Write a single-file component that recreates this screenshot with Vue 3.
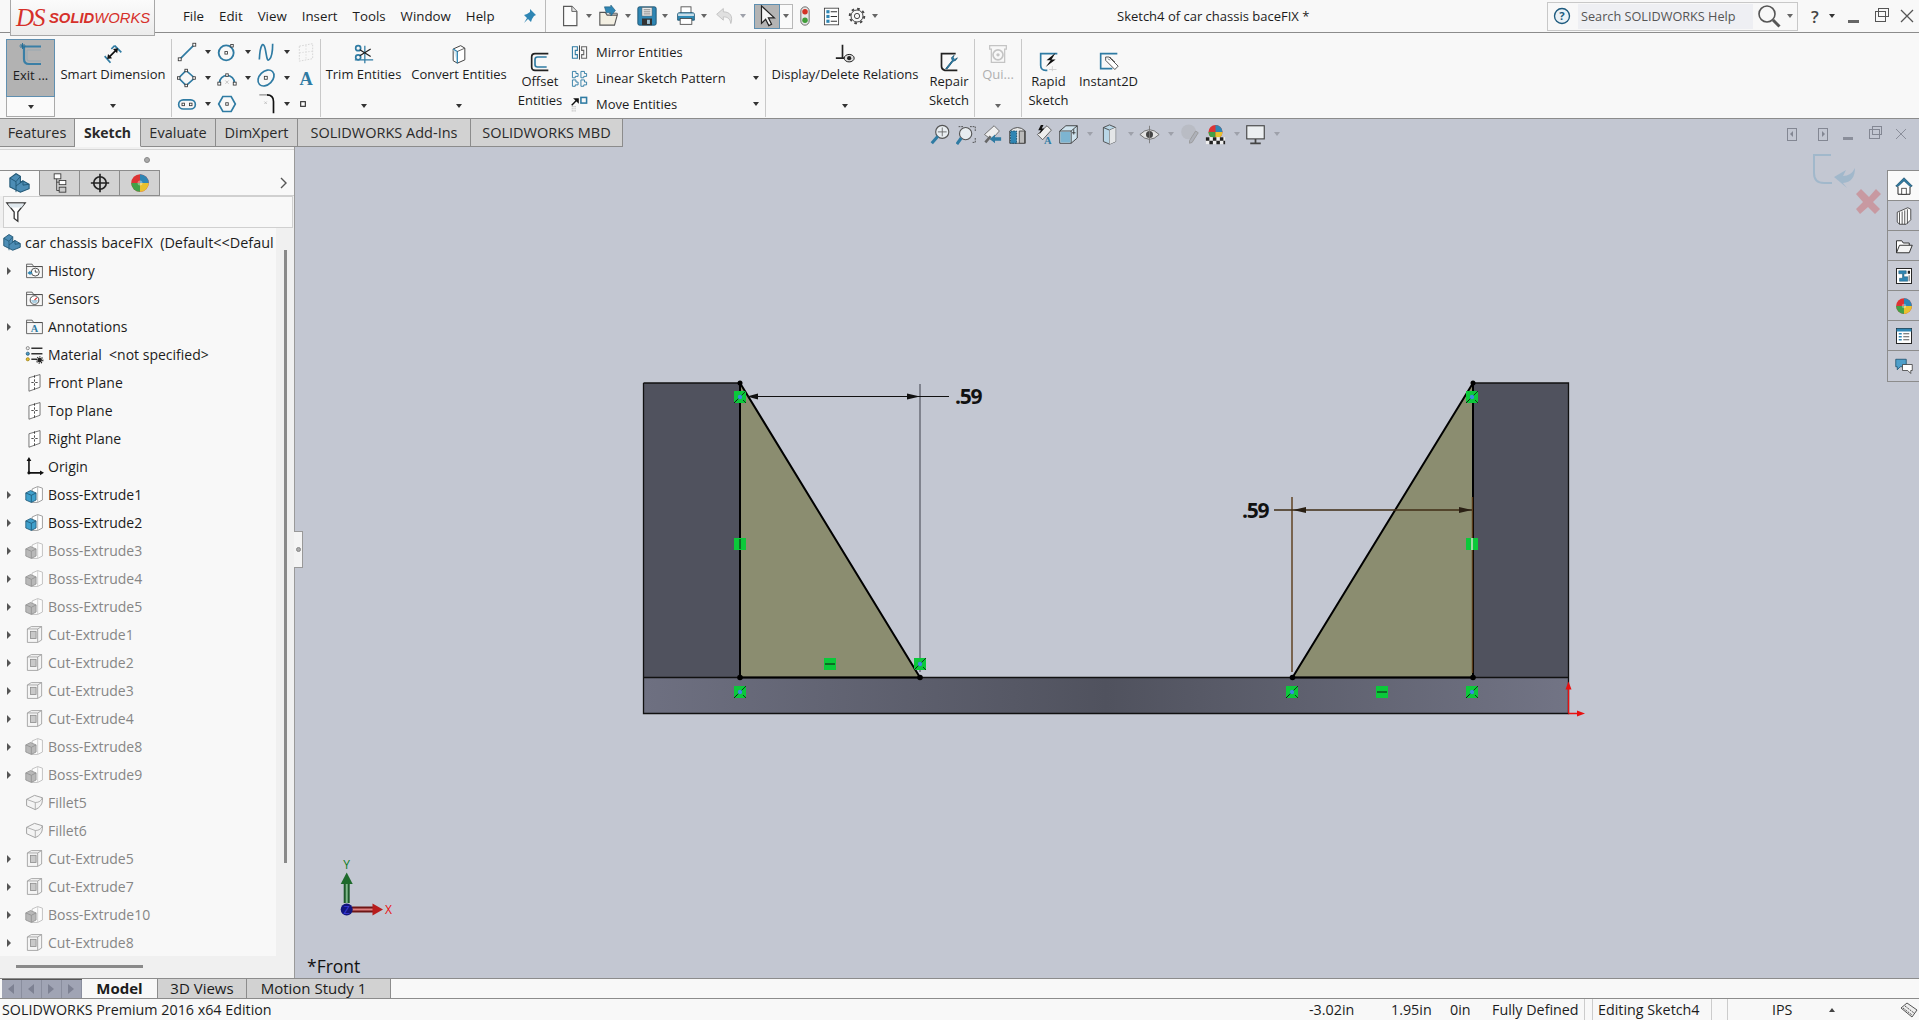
<script setup>
import { h } from 'vue'

// letters inside icons stay real text, placed where the icon is used
const letters = {
  'i-help': ['?', 12, 17.5, 15, 'Open Sans', '#1d5a7e'],
  'i-letter': ['A', 12, 20, 22, 'Liberation Serif', '#2f7ba3'],
  't-annot': ['A', 12, 19.5, 13, 'Liberation Serif', '#2f7ba3'],
  'h-dyn': ['A', 17, 23, 12, 'Liberation Serif', '#2f7ba3'],
}

// thin wrapper so the template is not full of <svg><use>
const Ic = ({ n, s = 24 }) => {
  const kids = [h('use', { href: '#' + n })]
  const l = letters[n]
  if (l) {
    kids.push(h('text', { x: l[1], y: l[2], 'font-size': l[3], 'font-family': l[4], 'font-weight': 700, fill: l[5], 'text-anchor': 'middle' }, l[0]))
  }
  return h('svg', { width: s, height: s, viewBox: '0 0 24 24', class: 'ic' }, kids)
}
Ic.props = ['n', 's']

const menus = ['File', 'Edit', 'View', 'Insert', 'Tools', 'Window', 'Help']

const quick = [
  { n: 'i-new', s: 22 },
  { n: 'i-open', s: 22 },
  { n: 'i-save', s: 20 },
  { n: 'i-print', s: 20 },
  { n: 'i-undo', s: 20 },
]

const sketchTools = [
  { n: 'i-line', c: 1 }, { n: 'i-circle', c: 1 }, { n: 'i-spline', c: 1 }, { n: 'i-gridbox', c: 0 },
  { n: 'i-poly', c: 1 }, { n: 'i-arc', c: 1 }, { n: 'i-ellipse', c: 1 }, { n: 'i-letter', c: 0 },
  { n: 'i-slot', c: 1 }, { n: 'i-hex', c: 0 }, { n: 'i-fillet', c: 1 }, { n: 'i-point', c: 0 },
]

const patterns = [
  { n: 'i-mirror', t: 'Mirror Entities', c: 0 },
  { n: 'i-pattern', t: 'Linear Sketch Pattern', c: 1 },
  { n: 'i-move', t: 'Move Entities', c: 1 },
]

const tabs = ['Features', 'Sketch', 'Evaluate', 'DimXpert', 'SOLIDWORKS Add-Ins', 'SOLIDWORKS MBD']

const headsUp = [
  { n: 'h-zoomfit', c: 0 }, { n: 'h-zoomarea', c: 0 }, { n: 'h-prev', c: 0 },
  { n: 'h-section', c: 0 }, { n: 'h-dyn', c: 0 }, { n: 'h-orient', c: 1 },
  { n: 'h-style', c: 1 }, { n: 'h-hide', c: 1 }, { n: 'h-edit', c: 0 },
  { n: 'h-scene', c: 1 }, { n: 'h-monitor', c: 1 },
]

const sideTabs = ['s-home', 's-books', 's-folder', 's-palette', 's-ball', 's-form', 's-chat']

const tree = [
  { t: 'History', n: 't-history', x: 1 },
  { t: 'Sensors', n: 't-sensors' },
  { t: 'Annotations', n: 't-annot', x: 1 },
  { t: 'Material\u00a0 <not specified>', n: 't-material' },
  { t: 'Front Plane', n: 't-plane' },
  { t: 'Top Plane', n: 't-plane' },
  { t: 'Right Plane', n: 't-plane' },
  { t: 'Origin', n: 't-origin' },
  { t: 'Boss-Extrude1', n: 't-boss', x: 1 },
  { t: 'Boss-Extrude2', n: 't-boss', x: 1 },
  { t: 'Boss-Extrude3', n: 't-boss', x: 1, off: 1 },
  { t: 'Boss-Extrude4', n: 't-boss', x: 1, off: 1 },
  { t: 'Boss-Extrude5', n: 't-boss', x: 1, off: 1 },
  { t: 'Cut-Extrude1', n: 't-cut', x: 1, off: 1 },
  { t: 'Cut-Extrude2', n: 't-cut', x: 1, off: 1 },
  { t: 'Cut-Extrude3', n: 't-cut', x: 1, off: 1 },
  { t: 'Cut-Extrude4', n: 't-cut', x: 1, off: 1 },
  { t: 'Boss-Extrude8', n: 't-boss', x: 1, off: 1 },
  { t: 'Boss-Extrude9', n: 't-boss', x: 1, off: 1 },
  { t: 'Fillet5', n: 't-fillet', off: 1 },
  { t: 'Fillet6', n: 't-fillet', off: 1 },
  { t: 'Cut-Extrude5', n: 't-cut', x: 1, off: 1 },
  { t: 'Cut-Extrude7', n: 't-cut', x: 1, off: 1 },
  { t: 'Boss-Extrude10', n: 't-boss', x: 1, off: 1 },
  { t: 'Cut-Extrude8', n: 't-cut', x: 1, off: 1 },
]

// sketch relation markers, page coordinates
const relations = [
  { x: 740, y: 397, k: 'pt' }, { x: 740, y: 544, k: 'v' }, { x: 830, y: 664, k: 'h' },
  { x: 920, y: 664, k: 'pt' }, { x: 740, y: 692, k: 'pt' },
  { x: 1472, y: 397, k: 'pt' }, { x: 1472, y: 544, k: 'par' }, { x: 1382, y: 692, k: 'h' },
  { x: 1292, y: 692, k: 'pt' }, { x: 1472, y: 692, k: 'pt' },
]
</script>

<template>
  <div class="app">
    <!-- icon sprite -->
    <svg class="sprite" aria-hidden="true">
      <defs>
        <linearGradient id="baseGrad" x1="0" x2="1" y1="0" y2="0">
          <stop offset="0" stop-color="#6e7081" />
          <stop offset="0.5" stop-color="#50525e" />
          <stop offset="1" stop-color="#727485" />
        </linearGradient>
      </defs>

      <!-- quick access -->
      <symbol id="i-new" viewBox="0 0 24 24"><path d="M5 1.500h9l5.500 5.500V22.500H5z" fill="#fcfcfc" stroke="#5a5a5a" stroke-width="1.300" /><path d="M14 1.500V7h5.500" fill="#e6e6e6" stroke="#5a5a5a" /></symbol>
      <symbol id="i-open" viewBox="0 0 24 24"><path d="M2 8h6l2 3h11l-3 11H2z" fill="#f3efe2" stroke="#555" stroke-width="1.200" /><path d="M21 11v-2H12" fill="none" stroke="#555" /><path d="M7 2h7V0l5 6-5 6v-3.500H9z" fill="#2f86b4" stroke="#1b5674" stroke-width=".6" /></symbol>
      <symbol id="i-save" viewBox="0 0 24 24"><rect x="1" y="1" width="22" height="22" rx="2" fill="#2f86b4" stroke="#174b68" /><rect x="6" y="2" width="12" height="10" fill="#e9e9e9" stroke="#666" stroke-width=".6" /><path d="M8 4.500h8M8 7h8M8 9.500h8" stroke="#777" /><rect x="6" y="15" width="12" height="8" fill="#333" /><rect x="12" y="16.500" width="3.500" height="5" fill="#9ec2d5" /></symbol>
      <symbol id="i-print" viewBox="0 0 24 24"><rect x="6" y="1" width="12" height="8" fill="#fff" stroke="#444" /><path d="M2 10q0-2 2-2h16q2 0 2 2v7H2z" fill="#2f8ab5" stroke="#174b68" /><rect x="2.500" y="9" width="19" height="3" fill="#c8dde8" /><rect x="5" y="15" width="14" height="7" fill="#fff" stroke="#444" /></symbol>
      <symbol id="i-undo" viewBox="0 0 24 24"><path d="M10 3 2 10l8 7v-4c5 0 8 2 9 8 3-9-1-14-9-14z" fill="#e0e0e0" stroke="#bdbdbd" /></symbol>
      <symbol id="i-select" viewBox="0 0 24 24"><path d="M6 1v19l4.500-4.500 3.500 7 3-1.500-3.500-7H20z" fill="#f4f4f4" stroke="#222" stroke-width="1.300" /></symbol>
      <symbol id="i-traffic" viewBox="0 0 24 24"><rect x="7" y="1" width="10" height="22" rx="5" fill="#e6e6e6" stroke="#555" /><circle cx="12" cy="7" r="3.300" fill="#d43124" /><circle cx="12" cy="17" r="3.300" fill="#3f9d38" /></symbol>
      <symbol id="i-list" viewBox="0 0 24 24"><rect x="3" y="1.500" width="18" height="21" fill="#fff" stroke="#333" /><rect x="5.500" y="4" width="4" height="4" fill="#2f86b4" /><rect x="5.500" y="10" width="4" height="4" fill="#2f86b4" /><rect x="5.500" y="16" width="4" height="4" fill="#2f86b4" /><path d="M11 6h8M11 12h8M11 18h8" stroke="#333" stroke-width="1.400" /></symbol>
      <symbol id="i-gear" viewBox="0 0 24 24"><circle cx="12" cy="12" r="8" fill="none" stroke="#444" stroke-width="1.300" /><circle cx="12" cy="12" r="9.700" fill="none" stroke="#444" stroke-width="2.600" stroke-dasharray="3.500 4.100" /><circle cx="12" cy="12" r="3.500" fill="none" stroke="#444" stroke-width="1.300" /></symbol>
      <symbol id="i-help" viewBox="0 0 24 24"><circle cx="12" cy="12" r="10" fill="#eaf1f6" stroke="#1d5a7e" stroke-width="1.800" /></symbol>
      <symbol id="i-search" viewBox="0 0 24 24"><circle cx="10" cy="10" r="8" fill="none" stroke="#555" stroke-width="1.600" /><path d="m16 16 6.500 6.500" stroke="#555" stroke-width="3" /></symbol>

      <!-- ribbon -->
      <symbol id="i-exit" viewBox="0 0 24 24"><path d="M5 3.500h17M5 3.500V16q0 5 5 5h12" fill="none" stroke="#3a7fa6" stroke-width="2.200" /><path d="M8 7h14M8 7v9q0 2 2 2h12" fill="none" stroke="#98a8b2" /><path d="M3.500 0v6M.5 3h6M1.500 1l4 4M5.500 1l-4 4" stroke="#1f6a93" stroke-width=".9" /></symbol>
      <symbol id="i-smartdim" viewBox="0 0 24 24"><path d="M2 14.500l7 8M14 2l8 8" fill="none" stroke="#2f7ba3" stroke-width="2" /><path d="M14 2 10 6" stroke="#2f7ba3" stroke-width="2" /><path d="M7 16 16 7" stroke="#111" stroke-width="2" /><path d="M5 18l1-6 5 5zM18 5l-1 6-5-5z" fill="#111" /></symbol>
      <symbol id="i-line" viewBox="0 0 24 24"><path d="M4 20 20 4" stroke="#2f7ba3" stroke-width="2" /><rect x="1.500" y="19" width="3.500" height="3.500" fill="#fff" stroke="#333" /><rect x="19" y="1.500" width="3.500" height="3.500" fill="#fff" stroke="#333" /></symbol>
      <symbol id="i-circle" viewBox="0 0 24 24"><circle cx="11" cy="13" r="9" fill="none" stroke="#2f7ba3" stroke-width="2.200" /><rect x="9.500" y="11.500" width="3" height="3" fill="#fff" stroke="#333" /><rect x="16.500" y="3" width="3" height="3" fill="#fff" stroke="#333" /></symbol>
      <symbol id="i-spline" viewBox="0 0 24 24"><path d="M4 21C5 2 9-1 11 8s2 16 5 13 4-12 4-19" fill="none" stroke="#2f7ba3" stroke-width="2" /></symbol>
      <symbol id="i-gridbox" viewBox="0 0 24 24"><path d="M4 5l16-3v18L4 23z" fill="none" stroke="#d0d0d0" stroke-dasharray="2 1.500" /><path d="M12 4v17M4 13l16-2" stroke="#dcdcdc" stroke-dasharray="2 1.500" /></symbol>
      <symbol id="i-poly" viewBox="0 0 24 24"><path d="M11 3 21 12 11 21 2 12z" fill="none" stroke="#2f7ba3" stroke-width="2" /><rect x="9.500" y="1.500" width="3" height="3" fill="#fff" stroke="#333" /><rect x="19" y="10.500" width="3" height="3" fill="#fff" stroke="#333" /><rect x=".5" y="10.500" width="3" height="3" fill="#fff" stroke="#333" /><rect x="9.500" y="19.500" width="3" height="3" fill="#fff" stroke="#333" /></symbol>
      <symbol id="i-arc" viewBox="0 0 24 24"><path d="M3 18A9 9 0 0 1 21 18" fill="none" stroke="#2f7ba3" stroke-width="2" /><path d="m10 15 4 4m0-4-4 4" stroke="#bbb" /><rect x="1" y="17" width="3.500" height="3.500" fill="#fff" stroke="#333" /><rect x="19.500" y="17" width="3.500" height="3.500" fill="#fff" stroke="#333" /><rect x="10.500" y="7" width="3" height="3" fill="#fff" stroke="#333" /></symbol>
      <symbol id="i-ellipse" viewBox="0 0 24 24"><ellipse cx="12" cy="12" rx="11" ry="8" transform="rotate(-45 12 12)" fill="none" stroke="#2f7ba3" stroke-width="2" /><rect x="10" y="10" width="3.500" height="3.500" fill="#fff" stroke="#333" /></symbol>
      <symbol id="i-letter" viewBox="0 0 24 24"><rect width="24" height="24" fill="none" /></symbol>
      <symbol id="i-slot" viewBox="0 0 24 24"><rect x="2" y="7" width="20" height="11" rx="5.500" fill="none" stroke="#2f7ba3" stroke-width="2" /><rect x="6" y="11" width="3" height="3" fill="#fff" stroke="#333" /><rect x="15" y="11" width="3" height="3" fill="#fff" stroke="#333" /></symbol>
      <symbol id="i-hex" viewBox="0 0 24 24"><path d="M7 3h10l5 9-5 9H7l-5-9z" fill="none" stroke="#2f7ba3" stroke-width="2" /><rect x="10.500" y="10.500" width="3" height="3" fill="#fff" stroke="#333" /></symbol>
      <symbol id="i-fillet" viewBox="0 0 24 24"><path d="M13 1q8 0 8 8v14" fill="none" stroke="#111" stroke-width="2" /><path d="M4 1h9" stroke="#aaa" stroke-width="2" /><path d="m10 9 3 3m0-3-3 3" stroke="#bbb" /></symbol>
      <symbol id="i-point" viewBox="0 0 24 24"><rect x="8" y="8" width="8" height="8" fill="#fff" stroke="#333" stroke-width="2" /></symbol>
      <symbol id="i-trim" viewBox="0 0 24 24"><path d="M1 19h22M13 2v21" stroke="#2f7ba3" stroke-width="1.500" /><circle cx="5" cy="5" r="3" fill="none" stroke="#2f7ba3" stroke-width="2" /><circle cx="5" cy="16" r="3" fill="none" stroke="#2f7ba3" stroke-width="2" /><path d="M7 7l13 8M7 14 20 6" stroke="#222" stroke-width="1.500" /></symbol>
      <symbol id="i-convert" viewBox="0 0 24 24"><path d="M5 6 14 2l5 3v14l-9 4-5-3z" fill="#fff" stroke="#444" stroke-width="1.200" /><path d="M5 6l5 3v14" fill="#d8e8f0" stroke="#2f86b4" stroke-width="1.500" /><path d="M10 9l9-4" stroke="#444" /></symbol>
      <symbol id="i-offset" viewBox="0 0 24 24"><path d="M22 2H6Q2 2 2 6v12q0 4 4 4h16" fill="none" stroke="#222" stroke-width="2" /><path d="M20 6H9Q6 6 6 9v6q0 3 3 3h11" fill="none" stroke="#2f7ba3" stroke-width="2" /></symbol>
      <symbol id="i-mirror" viewBox="0 0 24 24"><path d="M12 2v20" stroke="#222" stroke-width="1.200" /><path d="M2 4h7v5H6v6h3v5H2z" fill="none" stroke="#2f7ba3" stroke-width="1.500" /><path d="M22 4h-7v5h3v6h-3v5h7z" fill="none" stroke="#666" stroke-width="1.500" /></symbol>
      <symbol id="i-pattern" viewBox="0 0 24 24"><path d="M2 2h5v3h3v4H6v2H2zM14 2h5v3h3v4h-4v2h-4zM2 14h5v3h3v4H6v2H2zM14 14h5v3h3v4h-4v2h-4z" fill="none" stroke="#2f7ba3" stroke-width="1.300" /></symbol>
      <symbol id="i-move" viewBox="0 0 24 24"><path d="M1 13 9 5" stroke="#111" stroke-width="2" /><path d="M3 3h8v8z" fill="#111" /><rect x="14" y="2" width="8" height="8" fill="none" stroke="#2f7ba3" stroke-width="2.200" /><path d="M1 15h6M1 18h6M1 21h6" stroke="#bbb" stroke-width="1.500" stroke-dasharray="1.500 1" /></symbol>
      <symbol id="i-relations" viewBox="0 0 24 24"><path d="M9 1v16M1 17h14" stroke="#222" stroke-width="2" /><ellipse cx="17" cy="17" rx="6" ry="4.500" fill="#ddd" stroke="#222" stroke-width="1.200" /><circle cx="17" cy="17" r="2.500" fill="#222" /></symbol>
      <symbol id="i-repair" viewBox="0 0 24 24"><path d="M20 2H3v15q0 4 4 5h15" fill="none" stroke="#222" stroke-width="2" /><path d="M8 20 16 10l-1-3 3-3-1 3 2 2 3-2-2 3-3 1-7 9z" fill="#2f86b4" stroke="#1b5674" /></symbol>
      <symbol id="i-quick" viewBox="0 0 24 24"><path d="M2 2h20v4h-2v16H4V6H2z" fill="none" stroke="#c4c4c4" stroke-width="1.500" /><circle cx="12" cy="13" r="6" fill="none" stroke="#c4c4c4" stroke-width="2" /><circle cx="12" cy="13" r="2" fill="#c4c4c4" /></symbol>
      <symbol id="i-rapid" viewBox="0 0 24 24"><path d="M22 2H2v14q0 6 6 6h2" fill="none" stroke="#2f7ba3" stroke-width="2" /><path d="M20 1 9 10h5l-6 8 12-9h-5z" fill="#111" /><path d="M12 21h9M16 17v6" stroke="#ccc" /></symbol>
      <symbol id="i-instant" viewBox="0 0 24 24"><path d="M22 2H2v18h14" fill="none" stroke="#2f7ba3" stroke-width="2" /><path d="M8 6h4l11 11-4 4-2-2-9-9z" fill="#fff" stroke="#333" /><path d="M11 8l2 2m0-4 2 2m0 0 2 2m0 0 2 2" stroke="#333" /></symbol>

      <!-- heads-up -->
      <symbol id="h-zoomfit" viewBox="0 0 24 24"><circle cx="14" cy="9" r="7.500" fill="#e8edf1" stroke="#555" stroke-width="1.300" /><path d="M9 14 2 22" stroke="#2f7ba3" stroke-width="3.500" /><path d="M14 4v10M9 9h10" stroke="#666" /></symbol>
      <symbol id="h-zoomarea" viewBox="0 0 24 24"><circle cx="11" cy="11" r="7" fill="#e8edf1" stroke="#555" stroke-width="1.300" /><path d="M6 16 1 23" stroke="#2f7ba3" stroke-width="3.500" /><path d="M3 3h5m8 0h6v6m0 7v5h-4" fill="none" stroke="#444" stroke-dasharray="2 1" /></symbol>
      <symbol id="h-prev" viewBox="0 0 24 24"><path d="M4 12 15 2l6 6-9 10z" fill="#eee" stroke="#666" /><path d="m5 21 6-7m0 0" stroke="#666" stroke-width="3" /><path d="M10 17l6-5v3h7v4h-7v3z" fill="#2f7ba3" /></symbol>
      <symbol id="h-section" viewBox="0 0 24 24"><path d="M3 8q9-8 18 0v14H3z" fill="#e6e6e6" stroke="#444" /><path d="M4 8h7v14H4z" fill="#2f86b4" stroke="#174b68" stroke-dasharray="2 1" /><path d="M14 8h6v14h-6z" fill="#bbb" stroke="#444" /></symbol>
      <symbol id="h-dyn" viewBox="0 0 24 24"><path d="M5 12 16 2l5 5-10 11z" fill="#eee" stroke="#555" /><path d="M9 1 6 7h3l-2 5 6-7h-3l2-4z" fill="#111" /></symbol>
      <symbol id="h-orient" viewBox="0 0 24 24"><path d="M2 8l7-6h13v14l-7 6H2z" fill="#cfe3ee" stroke="#333" /><path d="M2 8h13v14" fill="none" stroke="#333" /><path d="M15 8l7-6" stroke="#333" /><path d="M3 9h11v12H3z" fill="#7db4d1" /><path d="M18 6v6m-2-2h4" stroke="#333" /></symbol>
      <symbol id="h-style" viewBox="0 0 24 24"><path d="M5 4 12 1l7 3v16l-7 3-7-3z" fill="#b9d6e6" stroke="#444" /><path d="M5 4l7 3 7-3M12 7v16" fill="none" stroke="#444" /><path d="M12 7l7-3v16l-7 3z" fill="#e4e6e8" /></symbol>
      <symbol id="h-hide" viewBox="0 0 24 24"><path d="M1 12q11-11 22 0-11 11-22 0z" fill="#e3e3e3" stroke="#666" /><circle cx="12" cy="12" r="4" fill="#444" /><path d="M12 2v20" stroke="#777" /></symbol>
      <symbol id="h-edit" viewBox="0 0 24 24"><circle cx="11" cy="9" r="8.500" fill="#b9bcc4" /><path d="M12 19 19 8l3 2-7 11-3 1z" fill="#aeb1b9" stroke="#999" /></symbol>
      <symbol id="h-scene" viewBox="0 0 24 24"><circle cx="12" cy="9" r="8" fill="#d33" /><path d="M12 1a8 8 0 0 1 8 8h-8z" fill="#2f86b4" /><path d="M4 9a8 8 0 0 0 8 8V9z" fill="#43a047" /><path d="M12 9h8a8 8 0 0 1-8 8z" fill="#e8c12e" /><path d="M1 15h22v8H1z" fill="#eee" /><path d="M1 15h4v4H1zM9 15h4v4H9zM17 15h4v4h-4zM5 19h4v4H5zM13 19h4v4h-4zM21 19h2v4h-2z" fill="#222" /></symbol>
      <symbol id="h-monitor" viewBox="0 0 24 24"><rect x="2" y="2" width="20" height="15" fill="#eceff1" stroke="#444" stroke-width="1.300" /><path d="M12 17v4M6 22h12" stroke="#444" stroke-width="2" /></symbol>

      <!-- right task pane -->
      <symbol id="s-home" viewBox="0 0 24 24"><path d="M1 12 12 1l11 11-2.500 1L12 5l-8.500 8z" fill="#2f7ba3" stroke="#174b68" /><path d="M4 13v10h16V13" fill="#fff" stroke="#222" stroke-width="1.300" /><rect x="9" y="15" width="6" height="8" fill="#fff" stroke="#222" /></symbol>
      <symbol id="s-books" viewBox="0 0 24 24"><path d="M3 7 17 1l4 2v14l-6 6H6l-3-3z" fill="#fff" stroke="#222" /><path d="M6 7v16M9.500 6v17M13 4.500V23M16.500 3v19" stroke="#222" /></symbol>
      <symbol id="s-folder" viewBox="0 0 24 24"><path d="M2 21V5h7l2 3h8v3" fill="#fff" stroke="#222" stroke-width="1.200" /><path d="M2 21l4-10h17l-4 10z" fill="#f4f4f4" stroke="#222" stroke-width="1.200" /></symbol>
      <symbol id="s-palette" viewBox="0 0 24 24"><rect x="2" y="2" width="20" height="20" fill="#fff" stroke="#222" stroke-width="1.300" /><path d="M5 5h10v4h-3v4h5v6H6v-4h4V9H5z" fill="#2f86b4" stroke="#174b68" stroke-width=".6" /><rect x="17" y="5" width="3" height="4" fill="#222" /><rect x="18" y="11" width="2" height="8" fill="#999" /></symbol>
      <symbol id="s-ball" viewBox="0 0 24 24"><circle cx="12" cy="12" r="10.500" fill="#d33" /><path d="M12 12V1.500a10.500 10.500 0 0 1 10.500 10.500z" fill="#2f86b4" /><path d="M12 12H1.500A10.500 10.500 0 0 0 12 22.500z" fill="#43a047" /><path d="M12 12h10.500A10.500 10.500 0 0 1 12 22.500z" fill="#e8c12e" /><circle cx="12" cy="12" r="3" fill="#fff" fill-opacity=".35" /></symbol>
      <symbol id="s-form" viewBox="0 0 24 24"><rect x="2" y="2" width="20" height="20" fill="#fff" stroke="#222" stroke-width="1.300" /><rect x="2" y="2" width="20" height="4" fill="#2f86b4" /><path d="M5 9h4M5 13h4M5 17h4" stroke="#2f86b4" stroke-width="2" /><path d="M11 9h8M11 13h8M11 17h8" stroke="#222" /></symbol>
      <symbol id="s-chat" viewBox="0 0 24 24"><path d="M1 3h14v10H7l-4 4v-4H1z" fill="#4f9fca" stroke="#174b68" /><path d="M10 10h13v8h-2v4l-4-4h-7z" fill="#fff" stroke="#333" /></symbol>

      <!-- tree and panel -->
      <symbol id="t-part" viewBox="0 0 24 24"><path d="M1 7 8 2l5 3v7l3-2 7 4v5l-10 4L1 17z" fill="#4d8db5" stroke="#1f5573" stroke-width="1.200" /><path d="M1 7l7 4v12M8 11l5-6M8 16l8-6M16 10v5l7-1" fill="none" stroke="#1f5573" /></symbol>
      <symbol id="t-tree" viewBox="0 0 24 24"><rect x="5" y="1" width="8" height="6" fill="#fff" stroke="#333" /><rect x="11" y="9" width="8" height="5" fill="#fff" stroke="#333" /><rect x="11" y="17" width="8" height="6" fill="#ccc" stroke="#333" /><path d="M8 7v14h3M8 11h3" fill="none" stroke="#333" /></symbol>
      <symbol id="t-target" viewBox="0 0 24 24"><circle cx="12" cy="12" r="7.500" fill="none" stroke="#222" stroke-width="2" /><path d="M12 1v22M1 12h22" stroke="#222" stroke-width="2" /></symbol>
      <symbol id="t-filter" viewBox="0 0 24 24"><path d="M2 2h20l-8 10v10l-4-3v-7z" fill="#fff" stroke="#333" stroke-width="1.400" /><path d="M3 3h18l-3 4H6z" fill="#dfe8ee" /></symbol>
      <symbol id="t-history" viewBox="0 0 24 24"><path d="M2 21V4h7l2 3h11v14z" fill="#f7f7f7" stroke="#444" /><path d="M2 7h20" stroke="#444" /><circle cx="13" cy="14" r="5" fill="#fff" stroke="#222" /><path d="M13 11v3h3" fill="none" stroke="#222" /><path d="M3 15l4-3v2h2v2H7v2z" fill="#2f86b4" /></symbol>
      <symbol id="t-sensors" viewBox="0 0 24 24"><path d="M2 21V4h7l2 3h11v14z" fill="#f7f7f7" stroke="#444" /><path d="M2 7h20" stroke="#444" /><circle cx="12" cy="14" r="5.500" fill="#fff" stroke="#222" /><path d="m12 14 3-3" stroke="#d33" stroke-width="1.600" /><path d="M8 14a4 4 0 0 0 8 0z" fill="#2f86b4" fill-opacity=".4" /></symbol>
      <symbol id="t-annot" viewBox="0 0 24 24"><path d="M2 21V4h7l2 3h11v14z" fill="#f7f7f7" stroke="#444" /><path d="M2 7h20" stroke="#444" /></symbol>
      <symbol id="t-material" viewBox="0 0 24 24"><circle cx="3.500" cy="4" r="2" fill="#eee" stroke="#777" /><circle cx="3.500" cy="11" r="2" fill="#4d9bc6" stroke="#1f5573" /><circle cx="3.500" cy="18" r="2" fill="#e8c12e" stroke="#9a7d10" /><path d="M8 4h14M8 11h14M8 18h7" stroke="#333" stroke-width="2" /><circle cx="18.500" cy="19" r="3" fill="#222" /><circle cx="18.500" cy="19" r="4" fill="none" stroke="#222" stroke-width="1.500" stroke-dasharray="1.500 1.500" /></symbol>
      <symbol id="t-plane" viewBox="0 0 24 24"><path d="M5 6 19 2v16L5 23z" fill="#fff" stroke="#555" /><path d="M12 3v20M8 12h8" stroke="#222" stroke-dasharray="3 2" /></symbol>
      <symbol id="t-origin" viewBox="0 0 24 24"><path d="M5 3v17h16" fill="none" stroke="#111" stroke-width="2" /><path d="M5 0 2 5h6zM24 20l-5-3v6z" fill="#111" /><circle cx="5" cy="20" r="2" fill="#111" /></symbol>
      <symbol id="t-boss" viewBox="0 0 24 24"><path d="M9 5l7-3 6 2v15l-6 3H9z" fill="#fff" stroke="#888" stroke-width="1" /><path d="M16 2v20" stroke="#aaa" /><path d="M1 10l6-3 7 3v9l-6 3-7-3z" fill="#3fa0cc" stroke="#1f5573" /><path d="M1 10l7 3v9M8 13l6-3" fill="none" stroke="#1f5573" /></symbol>
      <symbol id="t-cut" viewBox="0 0 24 24"><path d="M3 5l5-3h13v17l-5 3H3z" fill="#f4f4f4" stroke="#555" /><path d="M3 5h13v17" fill="none" stroke="#555" /><path d="M16 5l5-3" stroke="#555" /><rect x="7" y="8" width="7" height="9" fill="#aaa" stroke="#444" /></symbol>
      <symbol id="t-fillet" viewBox="0 0 24 24"><path d="M2 8l10-5 10 3v3q0 8-9 12l-11-5z" fill="#f2f2f2" stroke="#666" stroke-width="1.200" /><path d="M2 8l11 4v9M13 12q7 0 9-6" fill="none" stroke="#666" /></symbol>
    </svg>

    <header class="titlebar">
      <div class="logo">
        <span class="logo-ds">DS</span>
        <span class="logo-name"><b>SOLID</b>WORKS</span>
      </div>
      <nav class="menu">
        <span v-for="m in menus" :key="m">{{ m }}</span>
      </nav>
      <svg class="pin" width="16" height="16" viewBox="0 0 16 16"><path d="M9 1l6 6-2 1-2 3-1 3-3-3-4 4 3-5-3-3 3-1 3-2z" fill="#2f86b4" /></svg>
      <div class="title-sep"></div>
      <div class="quick">
        <span v-for="q in quick" :key="q.n" class="quick-item">
          <Ic :n="q.n" :s="q.s" /><i class="caret" :class="{ dim: q.n === 'i-undo' }"></i>
        </span>
        <span class="select-btn"><Ic n="i-select" :s="22" /></span>
        <span class="select-drop"><i class="caret"></i></span>
        <span class="quick-more q-traffic"><Ic n="i-traffic" :s="20" /></span>
        <span class="quick-more q-list"><Ic n="i-list" :s="19" /></span>
        <span class="quick-more q-gear"><Ic n="i-gear" :s="18" /><i class="caret"></i></span>
      </div>
      <div class="doc-title">Sketch4 of car chassis baceFIX *</div>
      <div class="search">
        <Ic n="i-help" :s="18" />
        <span class="search-input">Search SOLIDWORKS Help</span>
        <Ic n="i-search" :s="24" />
        <i class="caret"></i>
      </div>
      <span class="help-q">?</span>
      <i class="caret dark"></i>
      <div class="winctl">
        <span class="w-min"></span>
        <span class="w-max"></span>
        <svg width="14" height="14" viewBox="0 0 14 14"><path d="M1 1l12 12M13 1 1 13" stroke="#555" stroke-width="1.300" /></svg>
      </div>
    </header>

    <section class="ribbon">
      <div class="exit">
        <button class="exit-top">
          <Ic n="i-exit" :s="24" />
          <span>Exit ...</span>
        </button>
        <div class="exit-bot"><i class="caret dark"></i></div>
      </div>

      <div class="big w-smart">
        <Ic n="i-smartdim" :s="20" />
        <span class="lbl">Smart Dimension</span>
        <i class="caret dark"></i>
      </div>
      <div class="vsep"></div>

      <div class="tools">
        <div v-for="(t, i) in sketchTools" :key="i" class="tool">
          <Ic :n="t.n" :s="t.n === 'i-point' ? 14 : 20" />
          <i v-if="t.c" class="caret dark"></i>
        </div>
      </div>
      <div class="vsep"></div>

      <div class="big w-trim">
        <Ic n="i-trim" :s="20" />
        <span class="lbl">Trim Entities</span>
        <i class="caret dark"></i>
      </div>
      <div class="big w-convert">
        <Ic n="i-convert" :s="20" />
        <span class="lbl">Convert Entities</span>
        <i class="caret dark"></i>
      </div>
      <div class="big two w-offset">
        <Ic n="i-offset" :s="20" />
        <span class="lbl">Offset</span>
        <span class="lbl">Entities</span>
      </div>

      <div class="stack">
        <div v-for="p in patterns" :key="p.t" class="stack-row">
          <Ic :n="p.n" :s="17" />
          <span>{{ p.t }}</span>
          <i v-if="p.c" class="caret dark"></i>
        </div>
      </div>
      <div class="vsep"></div>

      <div class="big w-rel">
        <Ic n="i-relations" :s="20" />
        <span class="lbl">Display/Delete Relations</span>
        <i class="caret dark"></i>
      </div>
      <div class="big two w-repair">
        <Ic n="i-repair" :s="20" />
        <span class="lbl">Repair</span>
        <span class="lbl">Sketch</span>
      </div>
      <div class="vsep"></div>

      <div class="big w-quick disabled">
        <Ic n="i-quick" :s="20" />
        <span class="lbl">Qui...</span>
        <i class="caret"></i>
      </div>
      <div class="vsep"></div>

      <div class="big two w-rapid">
        <Ic n="i-rapid" :s="20" />
        <span class="lbl">Rapid</span>
        <span class="lbl">Sketch</span>
      </div>
      <div class="big two w-instant">
        <Ic n="i-instant" :s="20" />
        <span class="lbl">Instant2D</span>
      </div>
    </section>

    <div class="tabrow">
      <div class="cmdtabs">
        <span v-for="t in tabs" :key="t" class="cmdtab" :class="{ on: t === 'Sketch' }">{{ t }}</span>
      </div>
      <div class="headsup">
        <span v-for="b in headsUp" :key="b.n" class="hu" :class="{ wide: b.c }">
          <Ic :n="b.n" :s="21" /><i v-if="b.c" class="caret dim"></i>
        </span>
      </div>
      <div class="viewctl">
        <span class="vc-pane left"></span>
        <span class="vc-pane right"></span>
        <span class="vc-min"></span>
        <span class="vc-max"></span>
        <svg width="12" height="12" viewBox="0 0 12 12"><path d="M1 1l10 10M11 1 1 11" stroke="#8a8e9a" /></svg>
      </div>
    </div>

    <main class="body">
      <aside class="panel">
        <div class="panel-top"><span class="panel-dot"></span></div>
        <div class="paneltabs">
          <span class="ptab on"><Ic n="t-part" :s="21" /></span>
          <span class="ptab"><Ic n="t-tree" :s="20" /></span>
          <span class="ptab"><Ic n="t-target" :s="20" /></span>
          <span class="ptab"><Ic n="s-ball" :s="20" /></span>
          <svg class="chev" width="8" height="12" viewBox="0 0 8 12"><path d="M1 1l5 5-5 5" fill="none" stroke="#555" stroke-width="1.400" /></svg>
        </div>
        <div class="filter"><Ic n="t-filter" :s="22" /></div>
        <div class="tree-wrap">
          <div class="tree">
            <div class="root">
              <Ic n="t-part" :s="18" />
              <span>car chassis baceFIX&nbsp; (Default&lt;&lt;Defaul</span>
            </div>
            <div v-for="r in tree" :key="r.t" class="row" :class="{ off: r.off }">
              <i class="expander" :class="{ none: !r.x }"></i>
              <Ic :n="r.n" :s="19" />
              <span>{{ r.t }}</span>
            </div>
          </div>
          <div class="vscroll"><div class="vthumb"></div></div>
        </div>
        <div class="hscroll"><div class="hthumb"></div></div>
      </aside>

      <section class="viewport">
        <span class="sash"><i></i></span>

        <!-- model, page coordinates so numbers read off the screen -->
        <svg class="canvas" viewBox="295 147 1624 831" font-family="Open Sans">
          <rect x="643.500" y="383" width="96.500" height="294.500" fill="#50525e" />
          <rect x="1473" y="383" width="95.500" height="294.500" fill="#50525e" />
          <rect x="643.500" y="677.500" width="925" height="36" fill="url(#baseGrad)" />
          <path d="M740 383V677.500H920zM1473 383V677.500H1292.500z" fill="#8b8d70" />
          <path d="M643.500 383H740M1473 383h95.500V713.500H643.500V383M643.500 677.500H1568.500" fill="none" stroke="#111" stroke-width="1.300" />
          <path d="M740 383V677.500H920L740 383M1473 383V677.500H1292.500L1473 383" fill="none" stroke="#000" stroke-width="2" />
          <g fill="#000">
            <circle cx="740" cy="383" r="2.500" /><circle cx="740" cy="677.500" r="2.800" /><circle cx="920" cy="677.500" r="2.800" />
            <circle cx="1473" cy="383" r="2.500" /><circle cx="1473" cy="677.500" r="2.800" /><circle cx="1292.500" cy="677.500" r="2.800" />
          </g>

          <!-- left dimension -->
          <path d="M920 384V672" stroke="#6a6d77" stroke-width="1.500" />
          <path d="M747 396.500H949" stroke="#111" />
          <path d="M747 396.500l11-3v6zM920 396.500l-13-3v6z" fill="#111" />
          <text x="955" y="404" font-size="21" font-weight="700" letter-spacing="-1.300" fill="#111">.59</text>

          <!-- right dimension -->
          <path d="M1292 497V672M1472.500 497V673" stroke="#5a3a18" stroke-width="1.400" />
          <path d="M1274 510H1472" stroke="#3f2c14" stroke-width="1.300" />
          <path d="M1293 510l13-3v6zM1472 510l-13-3v6z" fill="#2a2014" />
          <text x="1242" y="517.500" font-size="21" font-weight="700" letter-spacing="-1.300" fill="#111">.59</text>

          <!-- relation markers -->
          <g v-for="(r, i) in relations" :key="i" :transform="`translate(${r.x} ${r.y})`">
            <rect x="-6" y="-6" width="12" height="12" fill="#0bc93a" />
            <template v-if="r.k === 'pt'">
              <path d="M-6 6 6-6" stroke="#111" stroke-width=".8" />
              <path d="M-6 6l3-3M6 6 3 3" stroke="#111" stroke-width=".8" />
              <circle r="2.200" fill="#3a8be0" />
            </template>
            <path v-else-if="r.k === 'v'" d="M0-5V5" stroke="#111" />
            <path v-else-if="r.k === 'h'" d="M-5 0H5" stroke="#111" />
            <path v-else d="M0-6V6" stroke="#d8dccb" stroke-width="1.500" />
          </g>

          <!-- part origin -->
          <path d="M1568.500 713.500V688M1568.500 713.500H1578" stroke="#e81010" stroke-width="1.300" />
          <path d="M1568.500 681.500l-3 8h6zM1585 713.500l-8-3v6z" fill="#e81010" />

          <!-- triad -->
          <path d="M346.700 903V884" stroke="#1e5a2c" stroke-width="6" />
          <path d="M346.700 903V884" stroke="#7fb98a" stroke-width="2" />
          <path d="M346.700 872.500l-6 11.500h12z" fill="#1e6a2c" />
          <path d="M352 909.500H373" stroke="#6e1616" stroke-width="6" />
          <path d="M352 909.500H373" stroke="#e08080" stroke-width="2" />
          <path d="M383 909.500l-10.500-6v12z" fill="#b81c1c" />
          <circle cx="346.700" cy="909.500" r="6" fill="#12147c" />
          <text x="346.700" y="869" text-anchor="middle" font-size="12" fill="#0c7c1c">Y</text>
          <text x="388.500" y="913.500" text-anchor="middle" font-size="12" fill="#e81010">X</text>
          <text x="346.700" y="913.500" text-anchor="middle" font-size="11" fill="#3a3ad8">Z</text>

          <!-- confirmation corner -->
          <g opacity=".45">
            <path d="M1831 155h-17v18q0 10 10 10h8" fill="none" stroke="#7aa6c4" stroke-width="2" />
            <path d="M1855 168q0 14-12 15l4 5-13-11 12-7-3 6q8 0 12-8z" fill="#7aa6c4" />
          </g>
          <path d="M1861 189l8 8 7-8 5 5-8 8 7 7-5 5-7-7-8 7-4-5 7-7-7-8z" fill="#c98a90" opacity=".75" />
        </svg>

        <div class="view-name">*Front</div>

        <div class="sidetabs">
          <span v-for="(s, i) in sideTabs" :key="s" class="stab" :class="{ on: i === 0 }"><Ic :n="s" :s="18" /></span>
        </div>
      </section>
    </main>

    <div class="bottomtabs">
      <div class="navbtns">
        <span class="nav first"></span><span class="nav prev"></span><span class="nav next"></span><span class="nav last"></span>
      </div>
      <span class="btab on">Model</span>
      <span class="btab w3d">3D Views</span>
      <span class="btab wms">Motion Study 1</span>
    </div>

    <footer class="status">
      <span class="st-name">SOLIDWORKS Premium 2016 x64 Edition</span>
      <span class="st c1">-3.02in</span>
      <span class="st c2">1.95in</span>
      <span class="st c3">0in</span>
      <span class="st c4">Fully Defined</span>
      <span class="st c5">Editing Sketch4</span>
      <span class="st c6"></span>
      <span class="st c7">IPS</span>
      <i class="up"></i>
      <svg class="st-icon" width="18" height="18" viewBox="0 0 18 18"><path d="M1 7l6-5 10 7-5 7z" fill="#eee" stroke="#555" /><path d="M3 7l9 7M5 5l9 7" stroke="#555" stroke-dasharray="2 1" /></svg>
    </footer>
  </div>
</template>

<style>
html,
body {
  margin: 0;
  overflow: hidden;
}
</style>

<style scoped>
.app {
  width: 1919px;
  height: 1020px;
  display: flex;
  flex-direction: column;
  overflow: hidden;
  position: relative;
  background: #f8f8f8;
  color: #1c1c1c;
  font-family: "Open Sans", "Noto Sans", sans-serif;
  font-size: 13px;
}

.sprite {
  position: absolute;
  width: 0;
  height: 0;
}

.ic {
  display: block;
  flex-shrink: 0;
}

.caret {
  display: inline-block;
  width: 0;
  height: 0;
  flex-shrink: 0;
  border-left: 3.5px solid transparent;
  border-right: 3.5px solid transparent;
  border-top: 4px solid #666;
}

.caret.dark {
  border-top-color: #333;
}

.caret.dim {
  border-top-color: #9ea1aa;
}

/* title bar */
.titlebar {
  height: 32px;
  flex: none;
  display: flex;
  align-items: center;
  border-bottom: 1px solid #8c8c8c;
  background: #f8f8f8;
}

.logo {
  position: absolute;
  left: 10px;
  top: 0;
  width: 145px;
  height: 36px;
  z-index: 3;
  display: flex;
  align-items: center;
  padding-left: 5px;
  box-sizing: border-box;
  background: linear-gradient(#fbfbfb, #ececec);
  border: 1px solid #a8a8a8;
  border-top: 0;
  color: #d6302a;
}

.logo-ds {
  font-family: "Liberation Serif", serif;
  font-style: italic;
  font-size: 25px;
  letter-spacing: -1px;
  width: 33px;
  flex: none;
}

.logo-name {
  font-family: "Liberation Sans", sans-serif;
  font-style: italic;
  font-size: 14.8px;
  letter-spacing: 0;
}

.menu {
  display: flex;
  gap: 15px;
  margin-left: 183px;
  width: 313px;
  flex: none;
  font-size: 13.3px;
}

.pin {
  margin-left: 25px;
  flex: none;
}

.title-sep {
  width: 1px;
  height: 32px;
  margin-left: 8px;
  background: #bbb;
  flex: none;
}

.quick {
  display: flex;
  align-items: center;
  margin-left: 13px;
}

.quick-item {
  display: flex;
  align-items: center;
  gap: 5px;
  width: 39px;
}

.select-btn {
  width: 26px;
  height: 25px;
  display: flex;
  align-items: center;
  justify-content: center;
  background: #b4b4b4;
  border: 1px solid #5f8fb0;
  box-sizing: border-box;
}

.select-drop {
  width: 13px;
  height: 25px;
  display: flex;
  align-items: center;
  justify-content: center;
  border: 1px solid #b8b8b8;
  border-left: 0;
  box-sizing: border-box;
  background: #fafafa;
}

.quick-more {
  display: flex;
  align-items: center;
  gap: 6px;
}

.q-traffic { margin-left: 2px; }
.q-list { margin-left: 7px; }
.q-gear { margin-left: 7px; }

.doc-title {
  margin-left: 239px;
  width: 430px;
  flex: none;
}

.search {
  display: flex;
  align-items: center;
  width: 251px;
  height: 29px;
  box-sizing: border-box;
  border: 1px solid #c8c8c8;
  padding-left: 5px;
  flex: none;
}

.search-input {
  width: 175px;
  height: 25px;
  line-height: 25px;
  margin: 0 4px 0 7px;
  padding-left: 3px;
  box-sizing: border-box;
  background: #eeeff3;
  color: #555;
  font-size: 12.7px;
}

.search .caret {
  margin-left: 6px;
}

.help-q {
  margin-left: 13px;
  font-size: 17px;
  font-weight: 600;
  color: #444;
}

.help-q + .caret {
  margin-left: 10px;
}

.winctl {
  display: flex;
  align-items: center;
  gap: 14px;
  margin-left: 13px;
}

.w-min {
  width: 11px;
  height: 3px;
  background: #666;
  margin-top: 11px;
}

.w-max {
  width: 9px;
  height: 9px;
  border: 1px solid #555;
  position: relative;
  margin-left: 2px;
}

.w-max::before {
  content: "";
  position: absolute;
  left: 2px;
  top: -4px;
  width: 9px;
  height: 7px;
  border: 1px solid #555;
}

/* ribbon */
.ribbon {
  height: 86px;
  flex: none;
  box-sizing: border-box;
  display: flex;
  padding: 6px 0 2px 6px;
  background: #f8f8f8;
  border-bottom: 1px solid #8c8c8c;
}

.exit {
  width: 49px;
  height: 78px;
  flex: none;
  display: flex;
  flex-direction: column;
}

.exit-top {
  height: 58px;
  padding: 3px 0 0;
  display: flex;
  flex-direction: column;
  align-items: center;
  background: #b2b2b2;
  border: 1px solid #5f8fb0;
  font: inherit;
  color: inherit;
  line-height: 16px;
}

.exit-bot {
  flex: 1;
  display: flex;
  align-items: center;
  justify-content: center;
  background: #fafafa;
  border: 1px solid #aaa;
  border-top: 0;
}

.big {
  height: 78px;
  flex: none;
  display: flex;
  flex-direction: column;
  align-items: center;
  padding-top: 5px;
  box-sizing: border-box;
  white-space: nowrap;
}

.big .lbl {
  line-height: 19px;
}

.big .ic + .lbl {
  margin-top: 1px;
}

.big .caret {
  margin-top: auto;
  margin-bottom: 9px;
}

.big.two {
  padding-top: 13px;
}

.big.two .ic + .lbl {
  margin-top: 0;
}

.w-smart { width: 116px; }
.w-trim { width: 85px; }
.w-convert { width: 106px; }
.w-offset { width: 56px; }
.w-rel { width: 158px; }
.w-repair { width: 50px; }
.w-quick { width: 46px; }
.w-rapid { width: 53px; }
.w-instant { width: 67px; }

.disabled {
  color: #b0b0b0;
}

.vsep {
  width: 1px;
  height: 78px;
  flex: none;
  background: #c9c9c9;
}

.tools {
  width: 148px;
  padding-left: 3px;
  box-sizing: border-box;
  flex: none;
  display: grid;
  grid-template-columns: repeat(4, 39.5px);
  grid-auto-rows: 26px;
}

.tool {
  display: flex;
  align-items: center;
  padding-left: 2px;
  gap: 8px;
}

.stack {
  width: 197px;
  flex: none;
  box-sizing: border-box;
  padding-left: 3px;
  display: grid;
  grid-auto-rows: 26px;
}

.stack-row {
  display: flex;
  align-items: center;
  gap: 8px;
}

.stack-row .caret {
  margin-left: auto;
  margin-right: 6px;
}

/* tabs and heads-up strip */
.tabrow {
  height: 28px;
  flex: none;
  display: flex;
  background: #c3c7d2;
}

.cmdtabs {
  display: flex;
  width: 623px;
  flex: none;
}

.cmdtab {
  display: flex;
  align-items: center;
  justify-content: center;
  flex: none;
  box-sizing: border-box;
  height: 28px;
  background: #d2d2d2;
  border-right: 1px solid #8c8c8c;
  border-bottom: 1px solid #8c8c8c;
  color: #2a2a2a;
  font-size: 14.5px;
}

.cmdtab:nth-child(1) { width: 75px; }
.cmdtab:nth-child(2) { width: 66px; }
.cmdtab:nth-child(3) { width: 75px; }
.cmdtab:nth-child(4) { width: 82px; }
.cmdtab:nth-child(5) { width: 173px; }
.cmdtab:nth-child(6) { width: 152px; }

.cmdtab.on {
  background: #f8f8f8;
  border-bottom-color: #f8f8f8;
  font-weight: 700;
  font-size: 14px;
}

.headsup {
  display: flex;
  align-items: center;
  margin-left: 307px;
  margin-top: 2px;
}

.hu {
  width: 25.7px;
  flex: none;
  display: flex;
  align-items: center;
  gap: 8px;
}

.hu.wide {
  width: 40.3px;
}

.viewctl {
  display: flex;
  align-items: center;
  gap: 15px;
  margin-left: auto;
  margin-right: 12px;
  margin-top: 2px;
}

.vc-pane {
  width: 10px;
  height: 13px;
  box-sizing: border-box;
  border: 1px solid #838793;
  position: relative;
}

.vc-pane + .vc-pane {
  margin-left: 6px;
}

.vc-pane::after {
  content: "";
  position: absolute;
  top: 2px;
  border-top: 3.5px solid transparent;
  border-bottom: 3.5px solid transparent;
}

.vc-pane.left::after {
  right: 3px;
  border-right: 3px solid #838793;
}

.vc-pane.right::after {
  left: 3px;
  border-left: 3px solid #838793;
}

.vc-min {
  width: 10px;
  height: 3px;
  background: #8a8e9a;
  margin-top: 8px;
}

.vc-max {
  width: 9px;
  height: 8px;
  border: 1px solid #838793;
  position: relative;
  margin-left: 1px;
}

.vc-max::before {
  content: "";
  position: absolute;
  left: 2px;
  top: -4px;
  width: 8px;
  height: 7px;
  border: 1px solid #838793;
}

/* main area */
.body {
  height: 831px;
  flex: none;
  display: flex;
}

.panel {
  width: 295px;
  flex: none;
  display: flex;
  flex-direction: column;
  background: #f0f0f0;
  border-right: 1px solid #9a9a9a;
  box-sizing: border-box;
}

.panel-top {
  height: 21px;
  flex: none;
  box-sizing: border-box;
  border-top: 1px solid #d4d4d4;
  margin-top: 2px;
  display: flex;
  align-items: center;
  justify-content: center;
  background: #f8f8f8;
}

.panel-dot {
  width: 6px;
  height: 6px;
  border-radius: 50%;
  background: #aaa;
  border: 1px solid #888;
  box-sizing: border-box;
}

.paneltabs {
  height: 26px;
  flex: none;
  display: flex;
  align-items: center;
  background: #f8f8f8;
  border-bottom: 1px solid #d0d0d0;
  box-sizing: border-box;
}

.ptab {
  width: 40px;
  height: 26px;
  flex: none;
  box-sizing: border-box;
  display: flex;
  align-items: center;
  justify-content: center;
  background: #d2d2d2;
  border-right: 1px solid #8c8c8c;
  border-top: 1px solid #8c8c8c;
  border-bottom: 1px solid #8c8c8c;
}

.ptab.on {
  background: #f8f8f8;
  border-bottom-color: #f8f8f8;
}

.chev {
  margin-left: auto;
  margin-right: 6px;
}

.filter {
  height: 32px;
  flex: none;
  margin: 0 1px 0 3px;
  padding-left: 1px;
  box-sizing: border-box;
  display: flex;
  align-items: center;
  background: #f8f8f8;
  border: 1px solid #d0d0d0;
}

.tree-wrap {
  height: 728px;
  flex: none;
  display: flex;
  overflow: hidden;
}

.tree {
  width: 276px;
  flex: none;
  background: #f8f8f8;
  overflow: hidden;
  font-size: 14px;
}

.root {
  height: 28.5px;
  display: flex;
  align-items: center;
  gap: 4px;
  padding-left: 3px;
  white-space: nowrap;
  font-size: 14.4px;
}

.row {
  height: 28px;
  display: flex;
  align-items: center;
  white-space: nowrap;
  color: #1c1c1c;
}

.row .expander {
  width: 0;
  height: 0;
  margin: 0 14px 0 7px;
  flex: none;
  border-top: 4px solid transparent;
  border-bottom: 4px solid transparent;
  border-left: 4px solid #555;
}

.row .expander.none {
  border-left-color: transparent;
}

.row .ic {
  margin-right: 4px;
}

.row.off {
  color: #868686;
}

.row.off .ic {
  filter: grayscale(1);
  opacity: 0.6;
}

.vscroll {
  flex: 1;
  padding-left: 8px;
}

.vthumb {
  width: 3px;
  height: 613px;
  margin-top: 22px;
  background: #8a8a8a;
}

.hscroll {
  flex: 1;
  padding: 9px 0 0 16px;
  box-sizing: border-box;
}

.hthumb {
  width: 127px;
  height: 3px;
  background: #8a8a8a;
}

.viewport {
  flex: 1;
  position: relative;
  background: #c3c7d2;
}

.canvas {
  position: absolute;
  left: 0;
  top: 0;
  width: 1624px;
  height: 831px;
}

.sash {
  position: absolute;
  z-index: 1;
  left: -1px;
  top: 384px;
  width: 9px;
  height: 37px;
  box-sizing: border-box;
  display: flex;
  align-items: center;
  justify-content: center;
  background: #f4f4f4;
  border: 1px solid #999;
  border-left: 0;
}

.sash i {
  width: 5px;
  height: 5px;
  border-radius: 50%;
  background: #aaa;
  border: 1px solid #888;
  box-sizing: border-box;
}

.view-name {
  position: absolute;
  left: 12px;
  bottom: 1px;
  font-size: 17.5px;
  line-height: 22px;
  color: #111;
}

.sidetabs {
  position: absolute;
  right: 0;
  top: 23px;
  width: 32px;
  display: flex;
  flex-direction: column;
  border: 1px solid #8c8c8c;
  border-right: 0;
  box-sizing: border-box;
}

.stab {
  height: 30px;
  display: flex;
  align-items: center;
  justify-content: center;
  box-sizing: border-box;
  border-bottom: 1px solid #8c8c8c;
  background: #c7cad4;
}

.stab:last-child {
  border-bottom: 0;
}

.stab.on {
  background: #fafafa;
}

/* bottom */
.bottomtabs {
  height: 21px;
  flex: none;
  display: flex;
  box-sizing: border-box;
  background: #f8f8f8;
  border-top: 1px solid #8c8c8c;
  border-bottom: 1px solid #8c8c8c;
  font-size: 15px;
}

.navbtns {
  margin-left: 2px;
  width: 80px;
  display: grid;
  grid-template-columns: repeat(4, 1fr);
  background: #a0a4b4;
  border-top: 1px solid #555;
  box-sizing: border-box;
}

.nav {
  position: relative;
  border-right: 1px solid #8a8e9e;
}

.nav::after {
  content: "";
  position: absolute;
  top: 4px;
  left: 6px;
  border-top: 5.5px solid transparent;
  border-bottom: 5.5px solid transparent;
}

.nav.first::after,
.nav.prev::after {
  border-right: 6px solid #7d8192;
}

.nav.next::after,
.nav.last::after {
  border-left: 6px solid #7d8192;
}

.btab {
  display: flex;
  align-items: center;
  justify-content: center;
  box-sizing: border-box;
  background: #d2d2d2;
  border-right: 1px solid #8c8c8c;
  flex: none;
  padding-bottom: 2px;
}

.btab.on {
  width: 76px;
  background: #f8f8f8;
  font-weight: 700;
}

.w3d { width: 89px; }
.wms { width: 144px; padding-right: 10px; }

.status {
  height: 21px;
  flex: none;
  display: flex;
  align-items: center;
  background: #f8f8f8;
  overflow: hidden;
  white-space: nowrap;
  line-height: 22px;
  font-size: 14.3px;
}

.st-name {
  width: 1309px;
  padding-left: 2px;
  box-sizing: border-box;
  flex: none;
}

.st {
  flex: none;
  box-sizing: border-box;
  height: 22px;
}

.c1 { width: 82px; }
.c2 { width: 59px; }
.c3 { width: 42px; }
.c4 { width: 93px; border-right: 1px solid #ccc; }
.c5 { width: 120px; margin-left: 7px; padding-left: 5px; border-left: 1px solid #ccc; border-right: 1px solid #ccc; }
.c6 { width: 16px; border-right: 1px solid #ccc; }
.c7 { width: 70px; padding-left: 44px; }

.up {
  margin-left: 31px;
  flex: none;
  width: 0;
  height: 0;
  border-left: 3.5px solid transparent;
  border-right: 3.5px solid transparent;
  border-bottom: 4px solid #444;
}

.st-icon {
  margin-left: 65px;
  flex: none;
}
</style>
